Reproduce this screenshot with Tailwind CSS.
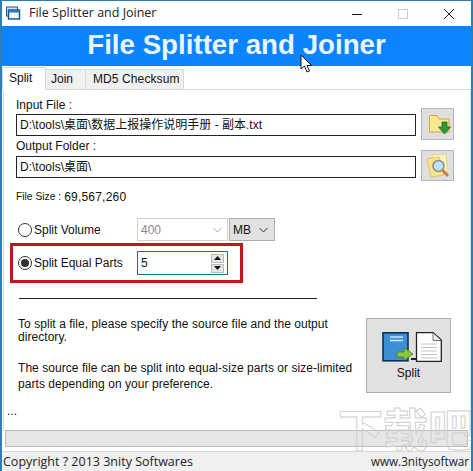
<!DOCTYPE html>
<html>
<head>
<meta charset="utf-8">
<script src="https://cdn.jsdelivr.net/npm/@tailwindcss/browser@4"></script>
</head>
<body class="bg-white">
<div class="relative w-[473px] h-[471px] overflow-hidden bg-white border-x border-t border-[#2f7fb5] border-l-2 border-r-2 font-['Liberation_Sans',sans-serif] text-[12px] text-[#111] flex flex-col">
  <!-- title bar -->
  <div class="h-[25px] flex items-center shrink-0">
    <svg class="ml-[3px] w-[16px] h-[16px]" viewBox="0 0 16 16">
      <rect x="1.5" y="1" width="11" height="9" fill="#cfe6f5" stroke="#1d5f8f"/>
      <rect x="3.5" y="4" width="11" height="9" fill="#eef7fc" stroke="#14507f" stroke-width="1.4"/>
      <rect x="3.5" y="4" width="11" height="2.5" fill="#2a7ab0"/>
    </svg>
    <span class="ml-[8px] text-[12.5px] font-['Open_Sans',sans-serif] text-[#222]">File Splitter and Joiner</span>
    <div class="ml-auto flex items-center h-full">
      <svg class="w-[12px] h-[12px] mr-[34px]" viewBox="0 0 12 12"><path d="M1 6.5H11" stroke="#111" stroke-width="1"/></svg>
      <svg class="w-[12px] h-[12px] mr-[34px]" viewBox="0 0 12 12"><rect x="1.5" y="1.5" width="9" height="9" fill="none" stroke="#ccc"/></svg>
      <svg class="w-[12px] h-[12px] mr-[16px]" viewBox="0 0 12 12"><path d="M1 1L11 11M11 1L1 11" stroke="#222" stroke-width="1"/></svg>
    </div>
  </div>
  <!-- banner -->
  <div class="h-[40px] shrink-0 bg-[#0a84ff] flex items-center justify-center text-[#eaf6ff] font-bold text-[27.7px] leading-none pb-[2px]">File Splitter and Joiner</div>
  <!-- tabs -->
  <div class="h-[23px] shrink-0 flex items-end relative z-10">
    <div class="w-[44px] h-[23px] bg-white border-x border-t border-[#d9d9d9] pl-[6px] pt-[1px] -mb-[1px]">Split</div>
    <div class="w-[40px] h-[20px] bg-[#f0f0f0] border-t border-r border-[#d9d9d9] pl-[5px] text-[12px]">Join</div>
    <div class="w-[98px] h-[20px] bg-[#f0f0f0] border-t border-r border-[#d9d9d9] pl-[7px] text-[12px] tracking-[0.1px]">MD5 Checksum</div>
  </div>
  <!-- panel -->
  <div class="relative w-[468px] h-[342px] shrink-0 ml-[1px] border border-[#d9d9d9] border-b-0 pl-[12px]">
    <div class="h-[14px] mt-[8px] leading-[14px]">Input File :</div>
    <div class="flex items-start">
      <div class="w-[400px] h-[22px] mt-[2px] border border-[#222] flex items-center pl-[3px] whitespace-nowrap font-['Liberation_Sans','Noto_Sans_CJK_SC',sans-serif]">D:\tools\桌面\数据上报操作说明手册 - 副本.txt</div>
      <div class="ml-[5px] -mt-[4px] w-[33px] h-[32px] bg-[#dfdfdf] border border-[#b5b5b5] flex items-center justify-center">
        <svg class="w-[24px] h-[24px] ml-[4px]" viewBox="0 0 24 24">
          <path d="M1.5 4V20H21V7H11L9 3.5H2Z" fill="#fbe88f" stroke="#c9a83e"/>
          <path d="M14 10H19V15H22.5L16.5 22L10.5 15H14Z" fill="#2f9a3c" stroke="#1d6a28" stroke-width="0.8"/>
        </svg>
      </div>
    </div>
    <div class="h-[14px] -mt-[1px] leading-[14px]">Output Folder :</div>
    <div class="flex items-start">
      <div class="w-[400px] h-[22px] mt-[3px] border border-[#222] flex items-center pl-[3px] whitespace-nowrap font-['Liberation_Sans','Noto_Sans_CJK_SC',sans-serif]">D:\tools\桌面\</div>
      <div class="ml-[5px] -mt-[3px] w-[33px] h-[31px] bg-[#dfdfdf] border border-[#b5b5b5] flex items-center justify-center">
        <svg class="w-[26px] h-[26px]" viewBox="0 0 26 26">
          <path d="M7 2L21 1L23 19L9 21Z" fill="#fff3c4" stroke="#e3c877" stroke-width="0.8"/>
          <path d="M2 6L14 4L19 22L6 24Z" fill="#fbe38a" stroke="#d8b750" stroke-width="0.8"/>
          <circle cx="13.5" cy="13" r="5.5" fill="#bfe3f5" stroke="#8a8a8a" stroke-width="1.5"/>
          <path d="M17.5 17L23 23" stroke="#c57a4a" stroke-width="2.6"/>
        </svg>
      </div>
    </div>
    <div class="mt-[9px] h-[14px] leading-[14px] text-[10.3px] flex"><span>File Size :</span><span class="ml-[3px] text-[12px] tracking-[0.2px]">69,567,260</span></div>
    <!-- split volume -->
    <div class="mt-[14px] h-[23px] flex items-center">
      <span class="ml-[2px] w-[14px] h-[14px] rounded-full border border-[#333] bg-white shrink-0"></span>
      <span class="ml-[2px] w-[103px]">Split Volume</span>
      <div class="w-[91px] h-[23px] border border-[#d0d0d0] flex items-center pl-[3px] text-[#888] justify-between pr-[5px]">400
        <svg class="w-[9px] h-[6px]" viewBox="0 0 9 6"><path d="M0.5 1L4.5 5L8.5 1" fill="none" stroke="#aaa"/></svg>
      </div>
      <div class="ml-[1px] w-[46px] h-[23px] bg-[#e1e1e1] border border-[#adadad] flex items-center pl-[3px] justify-between pr-[6px]">MB
        <svg class="w-[9px] h-[6px]" viewBox="0 0 9 6"><path d="M0.5 1L4.5 5L8.5 1" fill="none" stroke="#333"/></svg>
      </div>
    </div>
    <!-- split equal parts -->
    <div class="mt-[2px] -ml-[6px] w-[233px] h-[40px] border-[3px] border-[#c4161c] flex items-center">
      <span class="ml-[5px] w-[14px] h-[14px] rounded-full border border-[#333] bg-white shrink-0 flex items-center justify-center"><span class="w-[8px] h-[8px] rounded-full bg-[#333]"></span></span>
      <span class="ml-[2px] w-[103px] whitespace-nowrap">Split Equal Parts</span>
      <div class="w-[91px] h-[24px] border border-[#1b6f9c] flex items-center pl-[3px] justify-between pr-[3px]">5
        <div class="flex flex-col gap-[1px]">
          <div class="w-[13px] h-[9px] bg-[#e6e6e6] border border-[#bbb] flex items-center justify-center"><svg class="w-[7px] h-[4px]" viewBox="0 0 7 4"><path d="M3.5 0L7 4H0Z" fill="#111"/></svg></div>
          <div class="w-[13px] h-[9px] bg-[#e6e6e6] border border-[#bbb] flex items-center justify-center"><svg class="w-[7px] h-[4px]" viewBox="0 0 7 4"><path d="M0 0H7L3.5 4Z" fill="#111"/></svg></div>
        </div>
      </div>
    </div>
    <div class="mt-[15px] ml-[3px] w-[298px] h-[1px] bg-[#222]"></div>
    <!-- description + button -->
    <div class="flex mt-[19px]">
      <div class="w-[350px] pl-[2px] tracking-[0.05px]">
        <p class="leading-[13px]">To split a file, please specify the source file and the output directory.</p>
        <p class="mt-[16px] leading-[16px]">The source file can be split into equal-size parts or size-limited parts depending on your preference.</p>
      </div>
      <div class="w-[85px] h-[75px] bg-[#e1e1e1] border border-[#adadad] flex flex-col items-center pt-[13px]">
        <svg class="w-[60px] h-[30px] shrink-0 ml-[6px]" viewBox="0 0 60 30">
          <path d="M34.5 0.7H51L59.3 8V29.3H34.5Z" fill="#fff" stroke="#222" stroke-width="1.3"/>
          <path d="M51 1V8.5H59" fill="#eee" stroke="#555" stroke-width="0.8"/>
          <path d="M39 12H55M39 15.5H55M39 19H55M39 22.5H55M39 26H55" stroke="#c4c4c4"/>
          <path d="M29 27H35" stroke="#222" stroke-width="2"/>
          <rect x="1" y="0.8" width="25" height="28" fill="#3d8fd6" stroke="#0c2f55" stroke-width="1.6"/>
          <path d="M8 5H21M8 8.5H21" stroke="#cfe6f8" stroke-width="1.4"/>
          <path d="M15 20H22V15.5L31 22L22 28.5V25H15Z" fill="#8cc63f" stroke="#4d7d1c" stroke-width="0.8"/>
        </svg>
        <span class="mt-[2px]">Split</span>
      </div>
    </div>
    <div class="absolute left-[3px] top-[315px] leading-none">...</div>
  </div>
  <!-- progress -->
  <div class="absolute left-[3px] top-[429px] w-[463px] h-[17px] bg-[#e6e6e6] border border-[#bcbcbc]"></div>
  <!-- status -->
  <div class="absolute left-0 right-0 top-[450px] border-t border-[#d9d9d9] h-[21px] bg-[#f0f0f0] flex items-center pl-[1px] pt-[1px] font-['Open_Sans',sans-serif] text-[12.5px] text-[#222]">
    <span>Copyright ? 2013 3nity Softwares</span>
  </div>
  <!-- watermark -->
  <div class="absolute left-[336px] top-[404px] text-[45px] font-bold leading-none text-transparent [-webkit-text-stroke:1px_#cfcfcf] font-['Noto_Sans_CJK_SC',sans-serif] whitespace-nowrap">下载吧</div>
  <div class="absolute right-[2px] top-[452px] font-['Open_Sans',sans-serif] text-[11.7px] text-[#222] whitespace-nowrap">www.3nitysoftwar</div>
  <!-- cursor -->
  <svg class="absolute left-[298px] top-[53px] w-[14px] h-[20px]" viewBox="0 0 14 20">
    <path d="M1 1V15L4.5 12L7 18L9.5 17L7 11.5H11.5Z" fill="#fff" stroke="#111"/>
  </svg>
</div>
</body>
</html>
